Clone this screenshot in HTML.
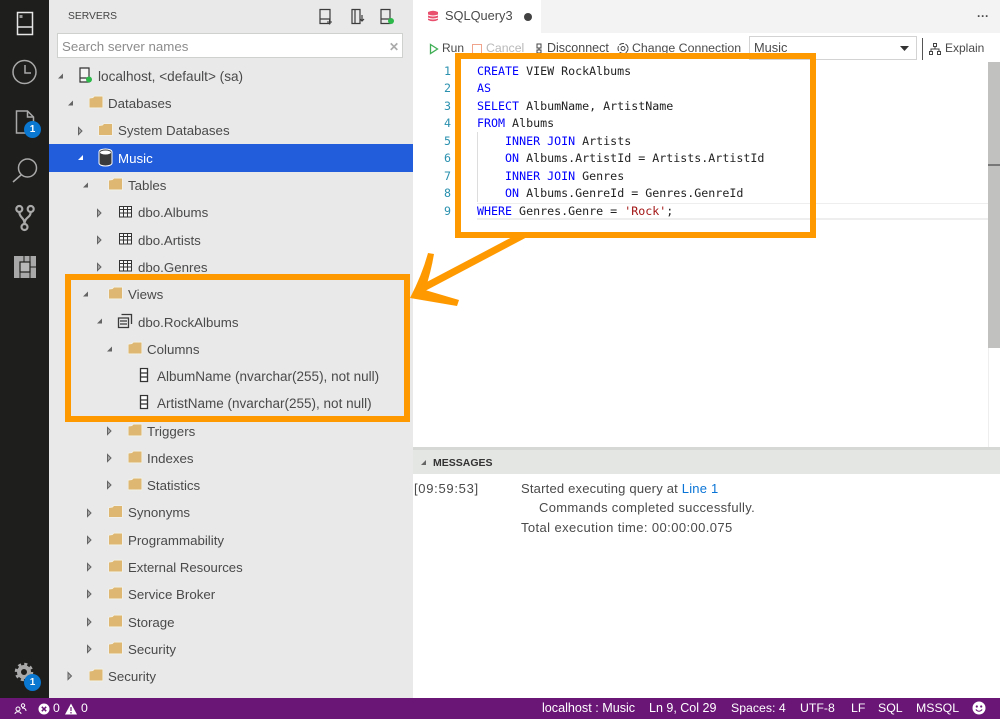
<!DOCTYPE html>
<html><head><meta charset="utf-8"><style>
html,body{margin:0;padding:0}
body{width:1000px;height:719px;overflow:hidden;position:relative;background:#fff;font-family:"Liberation Sans",sans-serif;font-size:13px;color:#424242}
.a{position:absolute}
.t{position:absolute;white-space:nowrap;line-height:16px;color:#4a4a4a;font-size:13.3px}
.w{font-size:13.6px}
.m{font-size:13px}
.c{position:absolute;left:477px;white-space:pre;font-family:"DejaVu Sans Mono",monospace;font-size:11.65px;line-height:17.5px;color:#222}
.c b{font-weight:normal;color:#0000ff}
.n{position:absolute;left:429px;width:22px;text-align:right;font-family:"DejaVu Sans Mono",monospace;font-size:11.65px;line-height:17.5px;color:#2b91af}
.s{position:absolute;top:700px;color:#fff;font-size:12.3px;line-height:16px;white-space:nowrap}
svg{position:absolute;overflow:visible}
</style></head><body>
<div class="a" style="left:0;top:0;width:49px;height:698px;background:#1e1e1c"></div>
<div class="a" style="left:49px;top:0;width:364px;height:698px;background:#e8e9e8"></div>
<div class="a" style="left:49px;top:144px;width:364px;height:28px;background:#225ddc"></div>
<div class="a" style="left:0;top:698px;width:1000px;height:21px;background:#6a1676"></div>

<!-- activity bar icons -->
<svg style="left:0;top:0" width="49" height="300" fill="none" stroke="#a9a9a9" stroke-width="1.5">
<rect x="17.5" y="12.5" width="15" height="22" stroke="#e6e6e6"/><path d="M18 27h14" stroke="#e6e6e6"/><rect x="19.5" y="15" width="3" height="3" fill="#999" stroke="none"/>
<circle cx="24.5" cy="72" r="11.5"/><path d="M25 65v8h6"/>
<path d="M16.500 111h11l6 6v16h-17z"/><path d="M27.500 111v6h6"/>
<circle cx="27.500" cy="168" r="9"/><path d="M21 175L13 182"/>
<circle cx="19.300" cy="209" r="3" stroke-width="2.200"/><circle cx="30.700" cy="209" r="3" stroke-width="2.200"/><circle cx="24.500" cy="227" r="3" stroke-width="2.200"/><path d="M19.300 212c0 6 5.200 5 5.200 12M30.700 212c0 6-6.200 5-6.200 12" stroke-width="2.200"/>
<rect x="14" y="256" width="22" height="22" fill="#a8a8a8" stroke="none"/>
<rect x="20" y="262" width="10" height="10" fill="#b8b8b8" stroke="#1e1e1c" stroke-width="1.200"/>
<path d="M24 256v6M30 256v6M30 267h6M20 278v-6M30 278v-6" stroke="#1e1e1c" stroke-width="1"/>
</svg>
<div class="a" style="left:24px;top:121px;width:17px;height:17px;border-radius:50%;background:#0a77d0;color:#fff;font:bold 10px/17px 'Liberation Sans',sans-serif;text-align:center">1</div>
<svg style="left:14px;top:662px" width="22" height="22" fill="none" stroke="#a9a9a9"><circle cx="10" cy="10" r="5" stroke-width="4"/><circle cx="10" cy="10" r="8" stroke-width="2.500" stroke-dasharray="3.100 3.180"/></svg>
<div class="a" style="left:24px;top:674px;width:17px;height:17px;border-radius:50%;background:#0a77d0;color:#fff;font:bold 10px/17px 'Liberation Sans',sans-serif;text-align:center">1</div>

<!-- sidebar header -->
<div class="t" style="left:68px;top:9px;font-size:10.300px;color:#444">SERVERS</div>
<svg style="left:318px;top:8px" width="80" height="18" fill="none" stroke="#3c3c3c" stroke-width="1.200">
<path d="M2 1.500h10v14H2zM2 11h10"/><path d="M9 14h5M11.500 11.500v5" stroke-width="1"/>
<path d="M34 1.500h8v14h-8z"/><path d="M37 1.500v14M44 7v6M42 11l2 2 2-2"/>
<path d="M63 1.500h9v14h-9zM63 11h9"/><circle cx="73" cy="13" r="3" fill="#2db84a" stroke="none"/>
</svg>
<div class="a" style="left:57px;top:33px;width:346px;height:25px;background:#fff;border:1px solid #cfd1cf;box-sizing:border-box"></div>
<div class="t" style="left:62px;top:39px;color:#8c8c8c">Search server names</div>
<div class="t" style="left:389px;top:39px;color:#aaa;font-weight:bold;font-size:12px">✕</div>

<!-- tree text -->
<div class="t w" style="left:98px;top:69px">localhost, &lt;default&gt; (sa)</div>
<div class="t" style="left:108px;top:96px">Databases</div>
<div class="t" style="left:118px;top:123px">System Databases</div>
<div class="t" style="left:118px;top:151px;color:#fff">Music</div>
<div class="t" style="left:128px;top:178px">Tables</div>
<div class="t" style="left:138px;top:205px">dbo.Albums</div>
<div class="t" style="left:138px;top:233px">dbo.Artists</div>
<div class="t" style="left:138px;top:260px">dbo.Genres</div>
<div class="t" style="left:128px;top:287px">Views</div>
<div class="t" style="left:138px;top:315px">dbo.RockAlbums</div>
<div class="t" style="left:147px;top:342px">Columns</div>
<div class="t" style="left:157px;top:369px;font-size:13.5px">AlbumName (nvarchar(255), not null)</div>
<div class="t" style="left:157px;top:396px;font-size:13.5px">ArtistName (nvarchar(255), not null)</div>
<div class="t" style="left:147px;top:424px">Triggers</div>
<div class="t" style="left:147px;top:451px">Indexes</div>
<div class="t" style="left:147px;top:478px">Statistics</div>
<div class="t" style="left:128px;top:505px">Synonyms</div>
<div class="t" style="left:128px;top:533px">Programmability</div>
<div class="t" style="left:128px;top:560px;font-size:13.150px">External Resources</div>
<div class="t" style="left:128px;top:587px">Service Broker</div>
<div class="t" style="left:128px;top:615px">Storage</div>
<div class="t" style="left:128px;top:642px">Security</div>
<div class="t" style="left:108px;top:669px">Security</div>

<!-- tree icons -->
<svg style="left:0;top:0" width="413" height="698">
<defs><path id="f" d="M0 2l3.500-.5L5 0h8v11H0z" fill="#deb872" stroke="#f6f3ea" stroke-width="1.400" style="paint-order:stroke"/></defs>
<g fill="#646464" transform="translate(0 .5)">
<path d="M63 73v5h-5z"/><path d="M73 100v5h-5z"/><path d="M88 182v5h-5z"/><path d="M88 291v5h-5z"/><path d="M102 318v5h-5z"/><path d="M112 346v5h-5z"/>
</g>
<path d="M83 155v5h-5z" fill="#fff"/>
<g fill="#aaa" stroke="#646464" stroke-width="1">
<path d="M78.500 127.500l3.500 3.500-3.500 3.500zM97.500 209.500l3.500 3.500-3.500 3.500zM97.500 236.500l3.500 3.500-3.500 3.500zM97.500 263.500l3.500 3.500-3.500 3.500zM107.500 427.500l3.500 3.500-3.500 3.500zM107.500 454.500l3.500 3.500-3.500 3.500zM107.500 481.500l3.500 3.500-3.500 3.500zM87.500 509.500l3.500 3.500-3.500 3.500zM87.500 536.500l3.500 3.500-3.500 3.500zM87.500 563.500l3.500 3.500-3.500 3.500zM87.500 590.500l3.500 3.500-3.500 3.500zM87.500 618.500l3.500 3.500-3.500 3.500zM87.500 645.500l3.500 3.500-3.500 3.500zM68 672.500l3.500 3.500-3.500 3.500z"/>
</g>
<use href="#f" x="89.500" y="96.500"/>
<use href="#f" x="99" y="124"/>
<use href="#f" x="109" y="178.500"/>
<use href="#f" x="109" y="287.500"/>
<use href="#f" x="128.500" y="342.500"/>
<use href="#f" x="128.500" y="424.500"/>
<use href="#f" x="128.500" y="451.500"/>
<use href="#f" x="128.500" y="478.500"/>
<use href="#f" x="109" y="506"/>
<use href="#f" x="109" y="533.500"/>
<use href="#f" x="109" y="560.500"/>
<use href="#f" x="109" y="587.500"/>
<use href="#f" x="109" y="615.500"/>
<use href="#f" x="109" y="642.500"/>
<use href="#f" x="89.500" y="669.500"/>
<!-- server -->
<path d="M80 68h9v14h-9z" fill="#f4f4f4"/><g fill="none" stroke="#333" stroke-width="1.200"><path d="M80 68h9v14h-9zM80 78h9"/></g><circle cx="89" cy="79.500" r="3" fill="#2db84a"/>
<!-- db -->
<path d="M99 152c0-4 13-4 13 0v11c0 4-13 4-13 0z" fill="#3a3a3a" stroke="#fff" stroke-width="1"/><ellipse cx="105.500" cy="152.500" rx="5.500" ry="2" fill="#fff"/>
<!-- tables -->
<g fill="#f6f6f6"><rect x="119" y="206" width="13" height="11"/><rect x="119" y="233" width="13" height="11"/><rect x="119" y="260" width="13" height="11"/></g>
<g fill="none" stroke="#333" stroke-width="1">
<path d="M119.500 206.500h12v10.500h-12zM119.500 209.500h12M119.500 213h12M123.500 206.500v10.500M127.500 206.500v10.500"/>
<path d="M119.500 233.500h12v10.500h-12zM119.500 236.500h12M119.500 240h12M123.500 233.500v10.500M127.500 233.500v10.500"/>
<path d="M119.500 260.500h12v10.500h-12zM119.500 263.500h12M119.500 267h12M123.500 260.500v10.500M127.500 260.500v10.500"/>
<path d="M121.500 314.500h10v9.500M118.500 318h10v9.500h-10zM120 321h7M120 324h7" stroke="#3a3a3a" stroke-width="1.300"/>
<rect x="140" y="367.500" width="8" height="14.500" fill="#fff" stroke="none"/>
<rect x="140" y="394.500" width="8" height="14.500" fill="#fff" stroke="none"/>
<path d="M140.500 368.500h7v13h-7zM140.500 373h7M140.500 377h7" stroke-width="1.300"/>
<path d="M140.500 395.500h7v13h-7zM140.500 400h7M140.500 404h7" stroke-width="1.300"/>
</g>
</svg>

<!-- tabs -->
<div class="a" style="left:413px;top:0;width:587px;height:33px;background:#f3f3f3"></div>
<div class="a" style="left:413px;top:0;width:128px;height:33px;background:#fff"></div>
<svg style="left:427px;top:10px" width="12" height="13"><path d="M1 2q5-2.500 10 0v8q-5 2.500-10 0z" fill="#e8506e"/><path d="M1 5q5 2 10 0M1 8q5 2 10 0" stroke="#fff" fill="none"/></svg>
<div class="t" style="left:445px;top:8px;font-size:12.800px">SQLQuery3</div>
<div class="a" style="left:524px;top:12.500px;width:8px;height:8px;border-radius:50%;background:#424242"></div>
<div class="t" style="left:977px;top:8px;font-weight:bold;font-size:12px;letter-spacing:0">···</div>

<!-- toolbar -->
<svg style="left:429px;top:43px" width="10" height="12"><path d="M1.500 1.500l7 4.500-7 4.500z" fill="none" stroke="#3fae55" stroke-width="1.300"/></svg>
<div class="t" style="left:442px;top:40px;font-size:12px">Run</div>
<div class="a" style="left:472px;top:44px;width:10px;height:10px;border:1px solid #f0a48c;box-sizing:border-box"></div>
<div class="t" style="left:486px;top:40px;font-size:12.300px;color:#b8b8b8">Cancel</div>
<svg style="left:534px;top:42px" width="10" height="13" fill="none" stroke="#444"><path d="M3 2h4v4H3zM5 6v2M3 8h4v3H3z"/></svg>
<div class="t" style="left:547px;top:40px;font-size:12.500px">Disconnect</div>
<svg style="left:617px;top:42px" width="12" height="13" fill="none" stroke="#444"><circle cx="6" cy="6.500" r="5" stroke-dasharray="5 1.500"/><circle cx="6" cy="6.500" r="2"/></svg>
<div class="t" style="left:632px;top:40px;font-size:12.350px">Change Connection</div>
<div class="a" style="left:749px;top:36px;width:168px;height:24px;background:#fff;border:1px solid #d3d3d3;box-sizing:border-box"></div>
<div class="t" style="left:754px;top:40px;font-size:12.800px">Music</div>
<svg style="left:899px;top:45px" width="12" height="7"><path d="M1 1h9L5.500 6z" fill="#333"/></svg>
<div class="a" style="left:922px;top:38px;width:1px;height:22px;background:#555"></div>
<svg style="left:929px;top:42px" width="12" height="13" fill="none" stroke="#444"><path d="M4.500 1.500h3v3h-3zM.5 9.500h3v3h-3zM8.500 9.500h3v3h-3zM6 4.500v2.500M2 9.500V7h8v2.500"/></svg>
<div class="t" style="left:945px;top:40px;font-size:12px">Explain</div>

<!-- editor -->
<div class="a" style="left:477px;top:203px;width:523px;height:17px;border-top:1px solid #eee;border-bottom:2px solid #eee;box-sizing:border-box"></div>
<div class="a" style="left:477px;top:132px;width:1px;height:70px;background:#ddd"></div>
<div class="a" style="left:988px;top:62px;width:12px;height:286px;background:#c1c2c0"></div>
<div class="a" style="left:988px;top:164px;width:12px;height:2px;background:#777"></div>
<div class="a" style="left:988px;top:348px;width:1px;height:100px;background:#eee"></div>
<div class="n" style="top:63px">1</div><div class="n" style="top:80px">2</div><div class="n" style="top:98px">3</div><div class="n" style="top:115px">4</div><div class="n" style="top:133px">5</div><div class="n" style="top:150px">6</div><div class="n" style="top:168px">7</div><div class="n" style="top:185px">8</div><div class="n" style="top:203px">9</div>
<div class="c" style="top:63px"><b>CREATE</b> VIEW RockAlbums</div>
<div class="c" style="top:80px"><b>AS</b></div>
<div class="c" style="top:98px"><b>SELECT</b> AlbumName, ArtistName</div>
<div class="c" style="top:115px"><b>FROM</b> Albums</div>
<div class="c" style="top:133px">    <b>INNER JOIN</b> Artists</div>
<div class="c" style="top:150px">    <b>ON</b> Albums.ArtistId = Artists.ArtistId</div>
<div class="c" style="top:168px">    <b>INNER JOIN</b> Genres</div>
<div class="c" style="top:185px">    <b>ON</b> Albums.GenreId = Genres.GenreId</div>
<div class="c" style="top:203px"><b>WHERE</b> Genres.Genre = <span style="color:#a31515">'Rock'</span>;</div>

<!-- messages -->
<div class="a" style="left:413px;top:447px;width:587px;height:3px;background:#d6d8d5"></div>
<div class="a" style="left:413px;top:450px;width:587px;height:24px;background:#e4e6e3"></div>
<svg style="left:420px;top:459px" width="8" height="8"><path d="M6 1v5H1z" fill="#666"/></svg>
<div class="t" style="left:433px;top:455px;font-size:10.500px;font-weight:bold;color:#333">MESSAGES</div>
<div class="t m" style="left:414px;top:481px;letter-spacing:.7px">[09:59:53]</div>
<div class="t m" style="left:521px;top:481px;letter-spacing:.2px">Started executing query at <span style="color:#0a74d6">Line 1</span></div>
<div class="t m" style="left:539px;top:500px;letter-spacing:.3px">Commands completed successfully.</div>
<div class="t m" style="left:521px;top:520px;letter-spacing:.4px">Total execution time: 00:00:00.075</div>

<!-- orange highlights -->
<div class="a" style="left:65px;top:274px;width:345px;height:148px;border:6px solid #ff9900;box-sizing:border-box"></div>
<div class="a" style="left:455px;top:53px;width:361px;height:185px;border:6px solid #ff9900;box-sizing:border-box"></div>
<svg style="left:0;top:0" width="1000" height="719"><path d="M531 235L425 291L421 285L516 235z" fill="#ff9900"/><path d="M428 253L434 254Q431 272 425 290L459 300L457 306L410 298Q422 275 428 253z" fill="#ff9900"/></svg>

<!-- status bar -->
<svg style="left:14px;top:702px" width="75" height="14" fill="none" stroke="#fff"><circle cx="4" cy="7" r="2"/><path d="M1 12c0-3 6-3 6 0"/><circle cx="9" cy="3.500" r="1.700"/><path d="M8 6c3 0 4 1 4 3"/>
<circle cx="30" cy="7" r="5.500" fill="#fff" stroke="none"/><path d="M27.800 4.800l4.400 4.400M32.200 4.800l-4.400 4.400" stroke="#6a1676" stroke-width="1.500"/>
<path d="M57 1.500l6 11H51z" fill="#fff" stroke="none"/><path d="M57 5v4M57 10v1.500" stroke="#6a1676" stroke-width="1.200"/></svg>
<div class="s" style="left:53px">0</div>
<div class="s" style="left:81px">0</div>
<div class="s" style="left:542px;font-size:12.600px">localhost : Music</div>
<div class="s" style="left:649px;font-size:12.500px">Ln 9, Col 29</div>
<div class="s" style="left:731px">Spaces: 4</div>
<div class="s" style="left:800px">UTF-8</div>
<div class="s" style="left:851px">LF</div>
<div class="s" style="left:878px">SQL</div>
<div class="s" style="left:916px">MSSQL</div>
<svg style="left:972px;top:701px" width="15" height="15"><circle cx="7" cy="7" r="6.500" fill="#fff"/><circle cx="4.800" cy="5.500" r="1.100" fill="#6a1676"/><circle cx="9.200" cy="5.500" r="1.100" fill="#6a1676"/><path d="M3.800 8.500q3.200 3.500 6.400 0" fill="none" stroke="#6a1676"/></svg>
</body></html>
